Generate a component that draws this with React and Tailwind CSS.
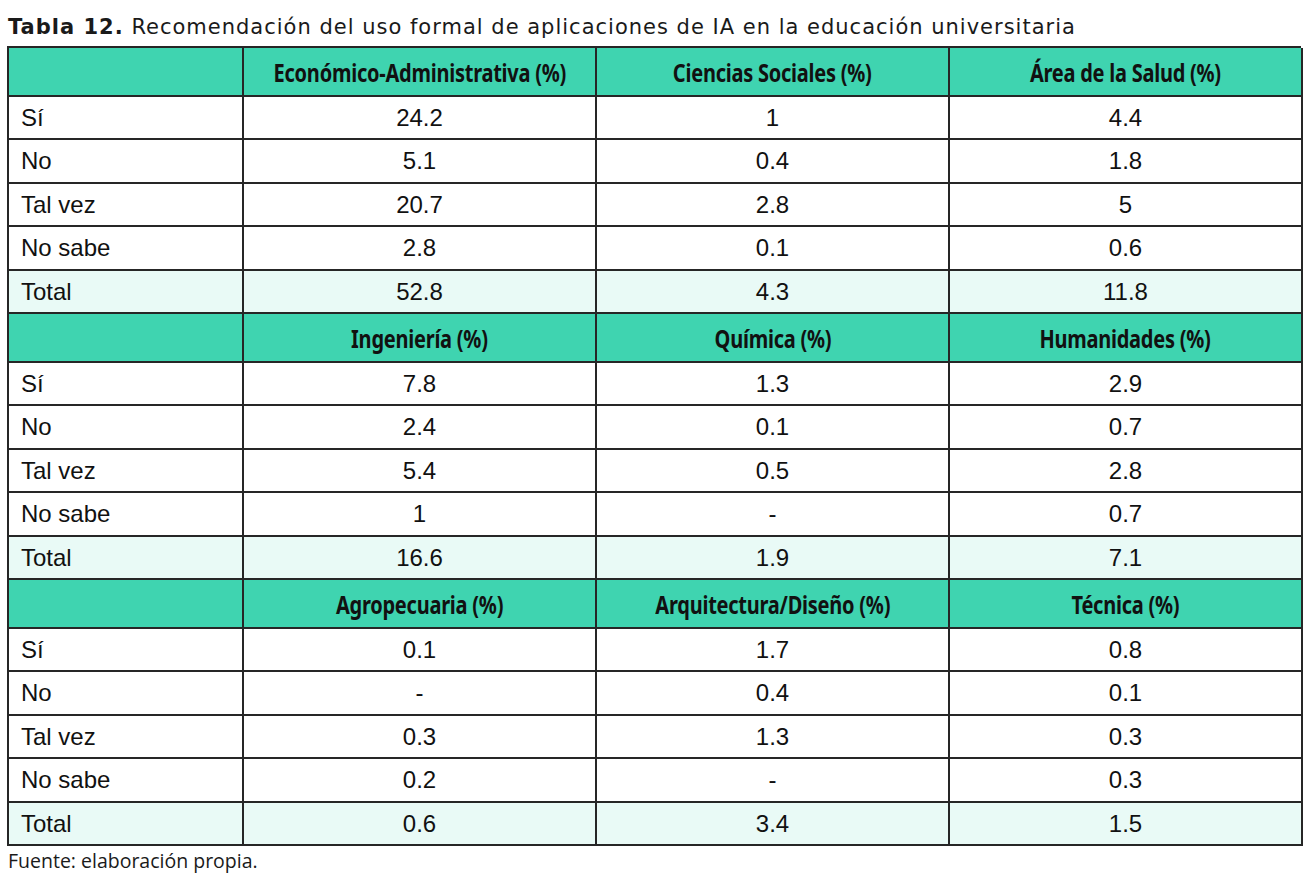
const sections = [
  {
    heads: ["Económico-Administrativa (%)", "Ciencias Sociales (%)", "Área de la Salud (%)"],
    rows: [
      ["Sí", "24.2", "1", "4.4"],
      ["No", "5.1", "0.4", "1.8"],
      ["Tal vez", "20.7", "2.8", "5"],
      ["No sabe", "2.8", "0.1", "0.6"],
      ["Total", "52.8", "4.3", "11.8"],
    ],
  },
  {
    heads: ["Ingeniería (%)", "Química (%)", "Humanidades (%)"],
    rows: [
      ["Sí", "7.8", "1.3", "2.9"],
      ["No", "2.4", "0.1", "0.7"],
      ["Tal vez", "5.4", "0.5", "2.8"],
      ["No sabe", "1", "-", "0.7"],
      ["Total", "16.6", "1.9", "7.1"],
    ],
  },
  {
    heads: ["Agropecuaria (%)", "Arquitectura/Diseño (%)", "Técnica (%)"],
    rows: [
      ["Sí", "0.1", "1.7", "0.8"],
      ["No", "-", "0.4", "0.1"],
      ["Tal vez", "0.3", "1.3", "0.3"],
      ["No sabe", "0.2", "-", "0.3"],
      ["Total", "0.6", "3.4", "1.5"],
    ],
  },
]

const rowHeights = ["h-[43px]", "h-[44px]", "h-[43px]", "h-[44px]", "h-[43px]"]

function Section({ heads, rows }) {
  return (
    <>
      <div className="h-[49px] bg-[#3fd4b0] border-r-2 border-b-2 border-[#262626]" />
      {heads.map((h) => (
        <div
          key={h}
          className="h-[49px] bg-[#3fd4b0] border-r-2 border-b-2 border-[#262626] flex items-center justify-center pt-[2px] whitespace-nowrap"
        >
          {/* condensed look: no narrow family installed, so squeeze Noto Sans */}
          <span className="inline-block scale-x-[0.8] text-[25px] font-bold text-[#111] [font-family:'Noto_Sans',sans-serif] tracking-[-0.3px]">
            {h}
          </span>
        </div>
      ))}
      {rows.map((r, i) => {
        const total = r[0] === "Total"
        return r.map((c, j) => (
          <div
            key={i + "-" + j}
            className={`${rowHeights[i]} border-r-2 border-b-2 border-[#262626] flex items-center text-[24px] text-[#111] ${total ? "bg-[#e9faf6]" : "bg-white"} ${j === 0 ? "pl-[12px]" : "justify-center"}`}
          >
            {c}
          </div>
        ))
      })}
    </>
  )
}

export default function App() {
  return (
    <div className="w-[1312px] h-[877px] bg-white pl-[7px] pt-[8px] [font-family:'Liberation_Sans',Arial,sans-serif]">
      <h1 className="pl-[1px] h-[38px] text-[21px] leading-[38px] text-[#1a1a1a] [font-family:'DejaVu_Sans',sans-serif] tracking-[1px] whitespace-nowrap">
        <span className="font-bold">Tabla 12.</span> Recomendación del uso formal de aplicaciones de IA en la educación universitaria
      </h1>
      <div className="grid grid-cols-[235px_353px_353px_353px] w-[1294px] border-l-2 border-t-2 border-[#262626]">
        {sections.map((s, i) => (
          <Section key={i} heads={s.heads} rows={s.rows} />
        ))}
      </div>
      <p className="pl-[1px] mt-[2px] text-[19.5px] leading-[26px] text-[#1a1a1a] [font-family:'Open_Sans',sans-serif]">
        Fuente: elaboración propia.
      </p>
    </div>
  )
}
